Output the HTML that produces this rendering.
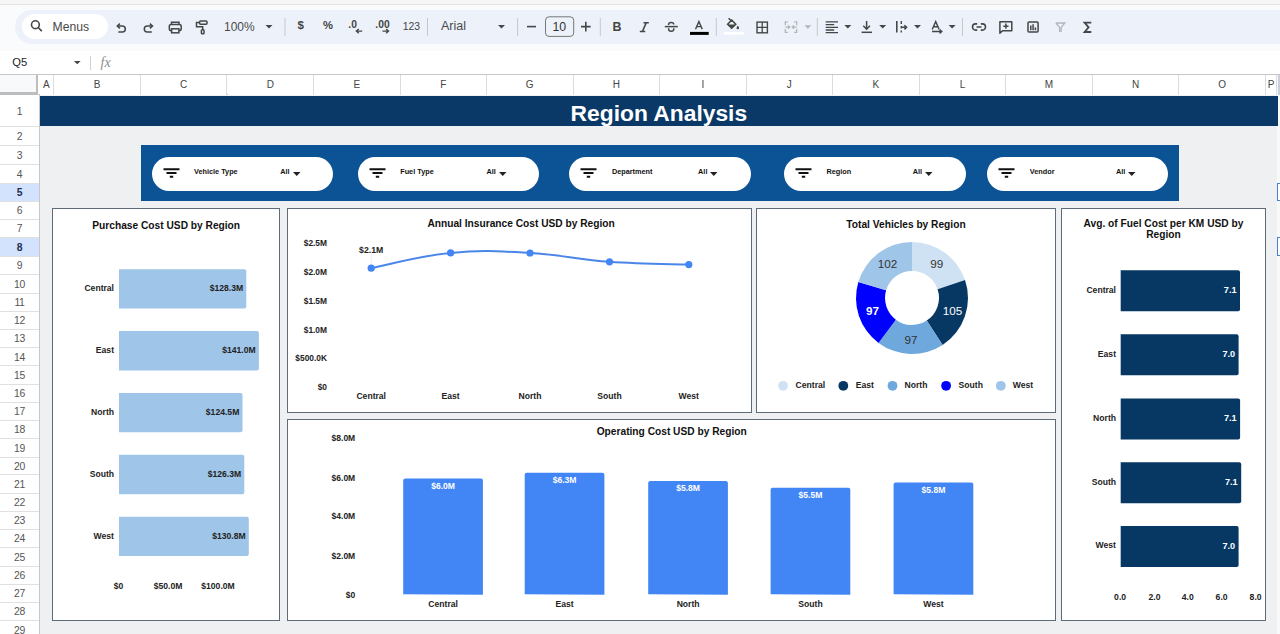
<!DOCTYPE html>
<html><head><meta charset="utf-8"><title>Region Analysis</title>
<style>
*{box-sizing:border-box}
html,body{margin:0;padding:0}
body{width:1280px;height:634px;overflow:hidden;position:relative;background:#f9fbfd;font-family:"Liberation Sans",sans-serif;color:#222}
.a{position:absolute}
.t{position:absolute;white-space:nowrap;line-height:1}
.b{font-weight:bold}
.rh{position:absolute;left:0;width:39px;background:#fff;color:#555;font-size:10.4px;letter-spacing:-0.4px;text-align:center;display:flex;align-items:center;justify-content:center}
.rh.sel{background:#d3e3fd;color:#1d2f55;font-weight:bold}
.ch{position:absolute;top:75px;height:20px;border-right:1px solid #dadce0;background:#fff;color:#444;font-size:10px;display:flex;align-items:center;justify-content:center;padding-bottom:2px}
.card{position:absolute;background:#fff;border:1px solid #5e6b78}
.pill{position:absolute;top:157px;height:34px;width:181.5px;background:#fff;border-radius:17px}
</style></head><body>

<div class="a" style="left:0;top:0;width:1280px;height:5px;background:#f6f6f6;border-bottom:1px solid #e2e2e2"></div>
<div class="a" style="left:15px;top:10px;width:1290px;height:33.5px;background:#edf2fa;border-radius:17px"></div>
<div class="a" style="left:22px;top:14px;width:86px;height:25px;background:#fff;border-radius:13px"></div>
<div class="t" style="left:52.5px;top:20.5px;font-size:12.2px;color:#4a4a4a">Menus</div>
<svg class="a" style="left:0;top:0" width="1280" height="50" viewBox="0 0 1280 50"><circle cx="35.4" cy="24.7" r="3.9" fill="none" stroke="#444746" stroke-width="1.6"/><path d="M38.2 27.5 L41.8 31.2" stroke="#444746" stroke-width="1.7"/><path d="M117.5 26 H122.3 A3 3 0 0 1 122.3 32 H118.3" fill="none" stroke="#444746" stroke-width="1.5"/><path d="M119.9 23.6 L117.3 26 L119.9 28.4" fill="none" stroke="#444746" stroke-width="1.5"/><path d="M152.3 26 H147.3 A3 3 0 0 0 147.3 32 H151.8" fill="none" stroke="#444746" stroke-width="1.5"/><path d="M149.9 23.6 L152.5 26 L149.9 28.4" fill="none" stroke="#444746" stroke-width="1.5"/><path d="M171.5 24.3 V22.3 H179 V24.3" fill="none" stroke="#444746" stroke-width="1.5"/><rect x="169.3" y="24.5" width="11.9" height="6" rx="1.8" fill="none" stroke="#444746" stroke-width="1.5"/><rect x="171.6" y="28.8" width="7.3" height="4" fill="#edf2fa" stroke="#444746" stroke-width="1.5"/><rect x="199.6" y="21" width="7.4" height="3.2" rx="0.9" fill="none" stroke="#444746" stroke-width="1.5"/><path d="M199.6 22.6 H196.5 V26.8 H202.7 V29.8" fill="none" stroke="#444746" stroke-width="1.5"/><rect x="201.4" y="29.8" width="2.6" height="4" rx="0.8" fill="none" stroke="#444746" stroke-width="1.5"/><path d="M265.5 25 H272.5 L269.0 28.5 Z" fill="#444746"/><path d="M285 18 V36" stroke="#c7c7c7" stroke-width="1"/><path d="M427.5 18 V36" stroke="#c7c7c7" stroke-width="1"/><path d="M517.6 18 V36" stroke="#c7c7c7" stroke-width="1"/><path d="M600.3 18 V36" stroke="#c7c7c7" stroke-width="1"/><path d="M716.3 18 V36" stroke="#c7c7c7" stroke-width="1"/><path d="M817.3 18 V36" stroke="#c7c7c7" stroke-width="1"/><path d="M962.5 18 V36" stroke="#c7c7c7" stroke-width="1"/><path d="M362.2 31.1 H356.5 M358.8 29 L356.3 31.1 L358.8 33.2" fill="none" stroke="#444746" stroke-width="1.3"/><path d="M382.5 31.1 H388.4 M386.1 29 L388.6 31.1 L386.1 33.2" fill="none" stroke="#444746" stroke-width="1.3"/><path d="M498 25 H505 L501.5 28.5 Z" fill="#444746"/><path d="M527 26.6 H536" stroke="#444746" stroke-width="1.6"/><path d="M581 26.6 H590.6 M585.8 21.8 V31.4" stroke="#444746" stroke-width="1.6"/><rect x="545.5" y="16.8" width="28.2" height="19.6" rx="3.5" fill="none" stroke="#747775" stroke-width="1"/><path d="M643.5 22.8 H648.8 M639.8 31.5 H645.2 M646.2 22.8 L642.4 31.5" fill="none" stroke="#444746" stroke-width="1.6"/><path d="M664.8 26.6 H677.8" stroke="#444746" stroke-width="1.5"/><path d="M668.6 25 V24.6 A2.6 2.2 0 0 1 673.8 24.6" fill="none" stroke="#444746" stroke-width="1.5"/><path d="M668.6 28.2 V29 A2.6 2.3 0 0 0 673.8 29 V28.2" fill="none" stroke="#444746" stroke-width="1.5"/><path d="M695.5 29.3 L698.9 21.6 L702.3 29.3 M696.8 26.6 H701" fill="none" stroke="#444746" stroke-width="1.4"/><rect x="690" y="31.9" width="18.7" height="3" fill="#000"/><path d="M727.6 24.2 L731.7 20.1 L735.8 24.2 L731.7 28.3 Z" fill="none" stroke="#444746" stroke-width="1.5"/><path d="M727.6 24.5 H735.8 L731.7 28.3 Z" fill="#444746"/><path d="M728.6 18.2 L731.9 21.5" stroke="#444746" stroke-width="1.5"/><path d="M737.8 25.6 Q736.3 27.6 736.5 28.2 A1.35 1.35 0 0 0 739.1 28.2 Q739.3 27.6 737.8 25.6 Z" fill="#444746"/><rect x="724" y="32" width="19.8" height="2.7" fill="#fff"/><rect x="757" y="22.1" width="10.4" height="10.7" fill="none" stroke="#444746" stroke-width="1.4"/><path d="M762.2 22.1 V32.8 M757 27.45 H767.4" stroke="#444746" stroke-width="1.3"/><path d="M787.8 21.9 H785.3 V25.3 M785.3 29 V32.3 H787.8 M794.2 21.9 H796.7 V25.3 M796.7 29 V32.3 H794.2" fill="none" stroke="#b3b6b9" stroke-width="1.3"/><path d="M785.3 27.1 H789.6 M788 25.4 L789.8 27.1 L788 28.8 M796.7 27.1 H792.4 M794 25.4 L792.2 27.1 L794 28.8" fill="none" stroke="#b3b6b9" stroke-width="1.3"/><path d="M804.4 25.3 H811.4 L807.9 28.8 Z" fill="#b3b6b9"/><path d="M825.7 21.9 H838 M825.7 24.6 H834.2 M825.7 27.3 H838 M825.7 30 H834.2 M825.7 32.7 H838" stroke="#444746" stroke-width="1.3"/><path d="M844.3 25.1 H851.3 L847.8 28.6 Z" fill="#444746"/><path d="M866.6 21 V29 M863.3 25.8 L866.6 29.2 L869.9 25.8" fill="none" stroke="#444746" stroke-width="1.5"/><path d="M861.6 32.3 H872" stroke="#444746" stroke-width="1.5"/><path d="M879.2 25.1 H886.2 L882.7 28.6 Z" fill="#444746"/><path d="M896.8 21 V32.6" stroke="#444746" stroke-width="1.6"/><path d="M901.3 21 V24 M901.3 26 V28.6 M901.3 30.6 V32.6" stroke="#444746" stroke-width="1.4"/><path d="M901.6 27.3 H906.4 M904.4 25.2 L906.6 27.3 L904.4 29.4" fill="none" stroke="#444746" stroke-width="1.5"/><path d="M914 25.1 H921 L917.5 28.6 Z" fill="#444746"/><path d="M932.2 29.5 L935.7 21.6 L939.2 29.5 M933.5 26.8 H937.9" fill="none" stroke="#444746" stroke-width="1.4"/><path d="M932 31.5 H941.6 M939.6 29.6 L941.8 31.5 L939.6 33.4" fill="none" stroke="#444746" stroke-width="1.4"/><path d="M948.6 25.1 H955.6 L952.1 28.6 Z" fill="#444746"/><path d="M977.2 23.9 H975.6 A3.1 3.1 0 0 0 975.6 30.1 H977.2 M980.8 23.9 H982.4 A3.1 3.1 0 0 1 982.4 30.1 H980.8 M976.5 27 H981.5" fill="none" stroke="#444746" stroke-width="1.6"/><path d="M999.9 21.7 H1011.8 V30.8 H1002.5 L999.9 33.3 Z" fill="none" stroke="#444746" stroke-width="1.5" stroke-linejoin="round"/><path d="M1005.9 23.6 V28.8 M1003.3 26.2 H1008.5" stroke="#444746" stroke-width="1.5"/><rect x="1028" y="22" width="10.1" height="10.1" rx="1" fill="none" stroke="#444746" stroke-width="1.5"/><path d="M1030.8 30.2 V25.4 M1033.1 30.2 V24.2 M1035.4 30.2 V27.6" stroke="#444746" stroke-width="1.5"/><path d="M1055.9 23 H1064.9 L1061.2 27.4 V32 M1059.6 32 V27.4 L1055.9 23" fill="none" stroke="#b3b6b9" stroke-width="1.3"/><path d="M1091.3 22.6 H1084.6 L1088.6 27.3 L1084.6 32 H1091.3" fill="none" stroke="#444746" stroke-width="1.8"/></svg>
<div class="t" style="left:224px;top:21px;font-size:12px;color:#4a4a4a">100%</div>
<div class="t b" style="left:297.5px;top:20.4px;font-size:11.5px;color:#444">$</div>
<div class="t b" style="left:323px;top:20.4px;font-size:11.2px;color:#444">%</div>
<div class="t b" style="left:348.3px;top:19.5px;font-size:10.3px;color:#444">.0</div>
<div class="t b" style="left:375.3px;top:19.5px;font-size:10.3px;color:#444">.00</div>
<div class="t" style="left:402.8px;top:21.5px;font-size:10.4px;color:#444">123</div>
<div class="t" style="left:441px;top:20px;font-size:12.5px;color:#4a4a4a">Arial</div>
<div class="t" style="left:552.5px;top:21px;font-size:12.3px;color:#333">10</div>
<div class="t b" style="left:612.6px;top:21.3px;font-size:12.4px;color:#444">B</div>
<div class="a" style="left:0;top:51px;width:1280px;height:23px;background:#fff"></div>
<div class="t" style="left:12.3px;top:57px;font-size:11.2px;color:#222">Q5</div>
<svg class="a" style="left:73.5px;top:61px" width="7" height="4" viewBox="0 0 7 4"><path d="M0 0 H6.6 L3.3 3.2 Z" fill="#444"/></svg>
<div class="a" style="left:90px;top:56px;width:1px;height:14px;background:#d0d0d0"></div>
<div class="t" style="left:100.5px;top:56px;font-size:14px;color:#8a8e92;font-style:italic;font-family:'Liberation Serif',serif">fx</div>
<div class="a" style="left:0;top:74px;width:1280px;height:21px;background:#fff;border-top:1px solid #c7c7c7;border-bottom:1px solid #c7c7c7"></div>
<div class="a" style="left:0;top:75px;width:38px;height:20px;background:#f8f9fa;border-right:2px solid #bdbdbd;border-bottom:3px solid #bdbdbd"></div>
<div class="ch" style="left:39.5px;width:14.9px">A</div>
<div class="ch" style="left:54.4px;width:86.5px">B</div>
<div class="ch" style="left:140.9px;width:86.5px">C</div>
<div class="ch" style="left:227.5px;width:86.5px">D</div>
<div class="ch" style="left:314.0px;width:86.5px">E</div>
<div class="ch" style="left:400.5px;width:86.5px">F</div>
<div class="ch" style="left:487.0px;width:86.5px">G</div>
<div class="ch" style="left:573.6px;width:86.5px">H</div>
<div class="ch" style="left:660.1px;width:86.5px">I</div>
<div class="ch" style="left:746.6px;width:86.5px">J</div>
<div class="ch" style="left:833.2px;width:86.5px">K</div>
<div class="ch" style="left:919.7px;width:86.5px">L</div>
<div class="ch" style="left:1006.2px;width:86.5px">M</div>
<div class="ch" style="left:1092.8px;width:86.5px">N</div>
<div class="ch" style="left:1179.3px;width:86.5px">O</div>
<div class="ch" style="left:1265.8px;width:11.7px">P</div>
<div class="rh" style="top:95.0px;height:32.1px">1</div>
<div class="rh" style="top:126.6px;height:19.1px">2</div>
<div class="rh" style="top:145.2px;height:19.8px">3</div>
<div class="rh" style="top:164.5px;height:19.4px">4</div>
<div class="rh sel" style="top:183.4px;height:18.5px">5</div>
<div class="rh" style="top:201.4px;height:18.5px">6</div>
<div class="rh" style="top:219.4px;height:18.6px">7</div>
<div class="rh sel" style="top:237.5px;height:19.5px">8</div>
<div class="rh" style="top:256.5px;height:18.9px">9</div>
<div class="rh" style="top:274.9px;height:19.0px">10</div>
<div class="rh" style="top:293.4px;height:18.5px">11</div>
<div class="rh" style="top:311.4px;height:18.5px">12</div>
<div class="rh" style="top:329.4px;height:19.0px">13</div>
<div class="rh" style="top:347.9px;height:18.5px">14</div>
<div class="rh" style="top:365.9px;height:19.1px">15</div>
<div class="rh" style="top:384.5px;height:18.5px">16</div>
<div class="rh" style="top:402.5px;height:18.4px">17</div>
<div class="rh" style="top:420.4px;height:18.7px">18</div>
<div class="rh" style="top:438.6px;height:18.9px">19</div>
<div class="rh" style="top:457.0px;height:18.4px">20</div>
<div class="rh" style="top:474.9px;height:19.0px">21</div>
<div class="rh" style="top:493.4px;height:18.3px">22</div>
<div class="rh" style="top:511.2px;height:18.7px">23</div>
<div class="rh" style="top:529.4px;height:18.8px">24</div>
<div class="rh" style="top:547.7px;height:18.8px">25</div>
<div class="rh" style="top:566.0px;height:18.9px">26</div>
<div class="rh" style="top:584.4px;height:18.7px">27</div>
<div class="rh" style="top:602.6px;height:18.8px">28</div>
<div class="rh" style="top:620.9px;height:18.8px">29</div>
<div class="a" style="left:0;top:126px;width:39px;height:1px;background:#e0e0e0"></div>
<div class="a" style="left:0;top:145px;width:39px;height:1px;background:#e0e0e0"></div>
<div class="a" style="left:0;top:164px;width:39px;height:1px;background:#e0e0e0"></div>
<div class="a" style="left:0;top:183px;width:39px;height:1px;background:#e0e0e0"></div>
<div class="a" style="left:0;top:201px;width:39px;height:1px;background:#e0e0e0"></div>
<div class="a" style="left:0;top:219px;width:39px;height:1px;background:#e0e0e0"></div>
<div class="a" style="left:0;top:237px;width:39px;height:1px;background:#e0e0e0"></div>
<div class="a" style="left:0;top:256px;width:39px;height:1px;background:#e0e0e0"></div>
<div class="a" style="left:0;top:274px;width:39px;height:1px;background:#e0e0e0"></div>
<div class="a" style="left:0;top:293px;width:39px;height:1px;background:#e0e0e0"></div>
<div class="a" style="left:0;top:311px;width:39px;height:1px;background:#e0e0e0"></div>
<div class="a" style="left:0;top:329px;width:39px;height:1px;background:#e0e0e0"></div>
<div class="a" style="left:0;top:347px;width:39px;height:1px;background:#e0e0e0"></div>
<div class="a" style="left:0;top:365px;width:39px;height:1px;background:#e0e0e0"></div>
<div class="a" style="left:0;top:384px;width:39px;height:1px;background:#e0e0e0"></div>
<div class="a" style="left:0;top:402px;width:39px;height:1px;background:#e0e0e0"></div>
<div class="a" style="left:0;top:420px;width:39px;height:1px;background:#e0e0e0"></div>
<div class="a" style="left:0;top:438px;width:39px;height:1px;background:#e0e0e0"></div>
<div class="a" style="left:0;top:457px;width:39px;height:1px;background:#e0e0e0"></div>
<div class="a" style="left:0;top:474px;width:39px;height:1px;background:#e0e0e0"></div>
<div class="a" style="left:0;top:493px;width:39px;height:1px;background:#e0e0e0"></div>
<div class="a" style="left:0;top:511px;width:39px;height:1px;background:#e0e0e0"></div>
<div class="a" style="left:0;top:529px;width:39px;height:1px;background:#e0e0e0"></div>
<div class="a" style="left:0;top:547px;width:39px;height:1px;background:#e0e0e0"></div>
<div class="a" style="left:0;top:566px;width:39px;height:1px;background:#e0e0e0"></div>
<div class="a" style="left:0;top:584px;width:39px;height:1px;background:#e0e0e0"></div>
<div class="a" style="left:0;top:602px;width:39px;height:1px;background:#e0e0e0"></div>
<div class="a" style="left:0;top:620px;width:39px;height:1px;background:#e0e0e0"></div>
<div class="a" style="left:0;top:639px;width:39px;height:1px;background:#e0e0e0"></div>
<div class="a" style="left:39px;top:95px;width:1px;height:540px;background:#c7c7c7"></div>
<div class="a" style="left:40px;top:95px;width:1237px;height:540px;background:#eff0f2"></div>
<div class="a" style="left:1277px;top:75px;width:3px;height:560px;background:#f8f9fa"></div>
<div class="a" style="left:1277.5px;top:75px;width:2px;height:20px;background:#c9d0dc"></div>
<div class="a" style="left:1277px;top:183px;width:4px;height:18px;border:1px solid #4a7fd0;background:#fff"></div>
<div class="a" style="left:1277px;top:237px;width:4px;height:19px;border:1px solid #4a7fd0;background:#fff"></div>
<div class="a" style="left:40px;top:95.5px;width:1237.5px;height:30.5px;background:#0a3967"></div>
<div class="t b" style="left:570.6px;top:101.8px;font-size:22.8px;color:#fff">Region Analysis</div>
<div class="a" style="left:140.5px;top:145px;width:1038px;height:56px;background:#0b5394"></div>
<div class="pill" style="left:151.5px;width:181.5px"></div>
<svg class="a" style="left:162.5px;top:168px" width="17" height="13" viewBox="0 0 17 13"><path d="M0.5 1.2 H16.5 M3.5 5 H13.5 M6.8 8.8 H10.2" stroke="#111" stroke-width="2"/></svg>
<div class="t b" style="left:194.0px;top:168px;font-size:7.3px;color:#111">Vehicle Type</div>
<div class="t b" style="left:280.2px;top:168px;font-size:7.3px;color:#111">All</div>
<svg class="a" style="left:292.5px;top:172px" width="8" height="5" viewBox="0 0 8 5"><path d="M0 0 H7.5 L3.75 4 Z" fill="#222"/></svg>
<div class="pill" style="left:357.7px;width:181.5px"></div>
<svg class="a" style="left:368.7px;top:168px" width="17" height="13" viewBox="0 0 17 13"><path d="M0.5 1.2 H16.5 M3.5 5 H13.5 M6.8 8.8 H10.2" stroke="#111" stroke-width="2"/></svg>
<div class="t b" style="left:400.2px;top:168px;font-size:7.3px;color:#111">Fuel Type</div>
<div class="t b" style="left:486.4px;top:168px;font-size:7.3px;color:#111">All</div>
<svg class="a" style="left:498.7px;top:172px" width="8" height="5" viewBox="0 0 8 5"><path d="M0 0 H7.5 L3.75 4 Z" fill="#222"/></svg>
<div class="pill" style="left:569.4px;width:181.5px"></div>
<svg class="a" style="left:580.4px;top:168px" width="17" height="13" viewBox="0 0 17 13"><path d="M0.5 1.2 H16.5 M3.5 5 H13.5 M6.8 8.8 H10.2" stroke="#111" stroke-width="2"/></svg>
<div class="t b" style="left:611.9px;top:168px;font-size:7.3px;color:#111">Department</div>
<div class="t b" style="left:698.0999999999999px;top:168px;font-size:7.3px;color:#111">All</div>
<svg class="a" style="left:710.4px;top:172px" width="8" height="5" viewBox="0 0 8 5"><path d="M0 0 H7.5 L3.75 4 Z" fill="#222"/></svg>
<div class="pill" style="left:784px;width:181.5px"></div>
<svg class="a" style="left:795px;top:168px" width="17" height="13" viewBox="0 0 17 13"><path d="M0.5 1.2 H16.5 M3.5 5 H13.5 M6.8 8.8 H10.2" stroke="#111" stroke-width="2"/></svg>
<div class="t b" style="left:826.5px;top:168px;font-size:7.3px;color:#111">Region</div>
<div class="t b" style="left:912.7px;top:168px;font-size:7.3px;color:#111">All</div>
<svg class="a" style="left:925px;top:172px" width="8" height="5" viewBox="0 0 8 5"><path d="M0 0 H7.5 L3.75 4 Z" fill="#222"/></svg>
<div class="pill" style="left:987.3px;width:181px"></div>
<svg class="a" style="left:998.3px;top:168px" width="17" height="13" viewBox="0 0 17 13"><path d="M0.5 1.2 H16.5 M3.5 5 H13.5 M6.8 8.8 H10.2" stroke="#111" stroke-width="2"/></svg>
<div class="t b" style="left:1029.8px;top:168px;font-size:7.3px;color:#111">Vendor</div>
<div class="t b" style="left:1116.0px;top:168px;font-size:7.3px;color:#111">All</div>
<svg class="a" style="left:1128.3px;top:172px" width="8" height="5" viewBox="0 0 8 5"><path d="M0 0 H7.5 L3.75 4 Z" fill="#222"/></svg>
<div class="card" style="left:52px;top:208px;width:228px;height:412.5px"></div>
<div class="card" style="left:287px;top:208px;width:465px;height:205px"></div>
<div class="card" style="left:755.5px;top:208px;width:300px;height:205px"></div>
<div class="card" style="left:1061px;top:208px;width:205px;height:412.5px"></div>
<div class="card" style="left:287px;top:419px;width:768.5px;height:201.5px"></div>
<svg class="a" style="left:0;top:0" width="1280" height="634" viewBox="0 0 1280 634" font-family="Liberation Sans, sans-serif"><text x="166.2" y="229" font-size="10.2" text-anchor="middle" font-weight="bold" fill="#111">Purchase Cost USD by Region</text><path d="M119 269.2 H244.3 Q246.3 269.2 246.3 271.2 V306.6 Q246.3 308.6 244.3 308.6 H119 Z" fill="#9fc5e8"/><text x="114" y="291.0" font-size="8.6" text-anchor="end" font-weight="bold" fill="#222">Central</text><text x="243.1" y="291.0" font-size="8.6" text-anchor="end" font-weight="bold" fill="#222">$128.3M</text><path d="M119 331 H256.9 Q258.9 331 258.9 333 V368.4 Q258.9 370.4 256.9 370.4 H119 Z" fill="#9fc5e8"/><text x="114" y="352.8" font-size="8.6" text-anchor="end" font-weight="bold" fill="#222">East</text><text x="255.7" y="352.8" font-size="8.6" text-anchor="end" font-weight="bold" fill="#222">$141.0M</text><path d="M119 392.9 H240.5 Q242.5 392.9 242.5 394.9 V430.3 Q242.5 432.3 240.5 432.3 H119 Z" fill="#9fc5e8"/><text x="114" y="414.7" font-size="8.6" text-anchor="end" font-weight="bold" fill="#222">North</text><text x="239.3" y="414.7" font-size="8.6" text-anchor="end" font-weight="bold" fill="#222">$124.5M</text><path d="M119 454.8 H242.3 Q244.3 454.8 244.3 456.8 V492.2 Q244.3 494.2 242.3 494.2 H119 Z" fill="#9fc5e8"/><text x="114" y="476.6" font-size="8.6" text-anchor="end" font-weight="bold" fill="#222">South</text><text x="241.1" y="476.6" font-size="8.6" text-anchor="end" font-weight="bold" fill="#222">$126.3M</text><path d="M119 516.7 H246.8 Q248.8 516.7 248.8 518.7 V554.1 Q248.8 556.1 246.8 556.1 H119 Z" fill="#9fc5e8"/><text x="114" y="538.5000000000001" font-size="8.6" text-anchor="end" font-weight="bold" fill="#222">West</text><text x="245.6" y="538.5000000000001" font-size="8.6" text-anchor="end" font-weight="bold" fill="#222">$130.8M</text><text x="118.5" y="588.5" font-size="8.6" text-anchor="middle" font-weight="bold" fill="#222">$0</text><text x="168.1" y="588.5" font-size="8.6" text-anchor="middle" font-weight="bold" fill="#222">$50.0M</text><text x="218" y="588.5" font-size="8.6" text-anchor="middle" font-weight="bold" fill="#222">$100.0M</text><text x="521.1" y="227.2" font-size="10.2" text-anchor="middle" font-weight="bold" fill="#111">Annual Insurance Cost USD by Region</text><text x="327" y="246.1" font-size="8.4" text-anchor="end" font-weight="bold" fill="#222">$2.5M</text><text x="327" y="274.90000000000003" font-size="8.4" text-anchor="end" font-weight="bold" fill="#222">$2.0M</text><text x="327" y="303.70000000000005" font-size="8.4" text-anchor="end" font-weight="bold" fill="#222">$1.5M</text><text x="327" y="332.5" font-size="8.4" text-anchor="end" font-weight="bold" fill="#222">$1.0M</text><text x="327" y="361.3" font-size="8.4" text-anchor="end" font-weight="bold" fill="#222">$500.0K</text><text x="327" y="390.1" font-size="8.4" text-anchor="end" font-weight="bold" fill="#222">$0</text><path d="M371.2 268.2 C387.1 265.1 418.8 255.9 450.6 252.9 C482.4 249.9 498.2 251.2 530 253 C561.8 254.8 577.7 259.5 609.5 261.8 C641.3 264.1 672.9 264.0 688.8 264.6" fill="none" stroke="#4a86e8" stroke-width="2"/><path d="M371.2 254 V265" stroke="#e2e2e2" stroke-width="0.6"/><circle cx="371.2" cy="268.2" r="3.6" fill="#4285f4"/><circle cx="450.6" cy="252.9" r="3.6" fill="#4285f4"/><circle cx="530" cy="253" r="3.6" fill="#4285f4"/><circle cx="609.5" cy="261.8" r="3.6" fill="#4285f4"/><circle cx="688.8" cy="264.6" r="3.6" fill="#4285f4"/><text x="371.2" y="252.9" font-size="8.7" text-anchor="middle" font-weight="bold" fill="#222">$2.1M</text><text x="371.2" y="399.2" font-size="8.6" text-anchor="middle" font-weight="bold" fill="#222">Central</text><text x="450.6" y="399.2" font-size="8.6" text-anchor="middle" font-weight="bold" fill="#222">East</text><text x="530" y="399.2" font-size="8.6" text-anchor="middle" font-weight="bold" fill="#222">North</text><text x="609.5" y="399.2" font-size="8.6" text-anchor="middle" font-weight="bold" fill="#222">South</text><text x="688.8" y="399.2" font-size="8.6" text-anchor="middle" font-weight="bold" fill="#222">West</text><text x="906" y="227.6" font-size="10.2" text-anchor="middle" font-weight="bold" fill="#111">Total Vehicles by Region</text><path d="M912.00 242.00 A56 56 0 0 1 965.04 280.03 L937.57 289.33 A27 27 0 0 0 912.00 271.00 Z" fill="#cfe2f3"/><path d="M965.04 280.03 A56 56 0 0 1 942.60 344.90 L926.75 320.61 A27 27 0 0 0 937.57 289.33 Z" fill="#073763"/><path d="M942.60 344.90 A56 56 0 0 1 878.52 342.89 L895.86 319.64 A27 27 0 0 0 926.75 320.61 Z" fill="#6fa8dc"/><path d="M878.52 342.89 A56 56 0 0 1 858.32 282.04 L886.12 290.30 A27 27 0 0 0 895.86 319.64 Z" fill="#0000ff"/><path d="M858.32 282.04 A56 56 0 0 1 912.00 242.00 L912.00 271.00 A27 27 0 0 0 886.12 290.30 Z" fill="#9fc5e8"/><text x="936.7" y="267.8" font-size="11.7" text-anchor="middle" font-weight="normal" fill="#333">99</text><text x="952.5" y="315.2" font-size="11.7" text-anchor="middle" font-weight="normal" fill="#fff">105</text><text x="911" y="343.7" font-size="11.7" text-anchor="middle" font-weight="normal" fill="#333">97</text><text x="872.6" y="315.2" font-size="11.7" text-anchor="middle" font-weight="bold" fill="#fff">97</text><text x="887.4" y="267.8" font-size="11.7" text-anchor="middle" font-weight="normal" fill="#333">102</text><circle cx="783.1" cy="385.8" r="4.9" fill="#cfe2f3"/><text x="795.6" y="388.3" font-size="8.6" text-anchor="start" font-weight="bold" fill="#222">Central</text><circle cx="843.3" cy="385.8" r="4.9" fill="#073763"/><text x="855.8" y="388.3" font-size="8.6" text-anchor="start" font-weight="bold" fill="#222">East</text><circle cx="892.5" cy="385.8" r="4.9" fill="#6fa8dc"/><text x="904.5" y="388.3" font-size="8.6" text-anchor="start" font-weight="bold" fill="#222">North</text><circle cx="946.1" cy="385.8" r="4.9" fill="#0000ff"/><text x="958.6" y="388.3" font-size="8.6" text-anchor="start" font-weight="bold" fill="#222">South</text><circle cx="1000.8" cy="385.8" r="4.9" fill="#9fc5e8"/><text x="1012.8" y="388.3" font-size="8.6" text-anchor="start" font-weight="bold" fill="#222">West</text><text x="1163.5" y="227.4" font-size="10.2" text-anchor="middle" font-weight="bold" fill="#111">Avg. of Fuel Cost per KM USD by</text><text x="1163.5" y="237.9" font-size="10.2" text-anchor="middle" font-weight="bold" fill="#111">Region</text><path d="M1120.7 270.2 H1238.0 Q1240 270.2 1240 272.2 V309.2 Q1240 311.2 1238.0 311.2 H1120.7 Z" fill="#073763"/><text x="1116" y="292.59999999999997" font-size="8.6" text-anchor="end" font-weight="bold" fill="#222">Central</text><text x="1236.5" y="292.8" font-size="9.1" text-anchor="end" font-weight="bold" fill="#fff">7.1</text><path d="M1120.7 334.3 H1236.6 Q1238.6 334.3 1238.6 336.3 V373.3 Q1238.6 375.3 1236.6 375.3 H1120.7 Z" fill="#073763"/><text x="1116" y="356.7" font-size="8.6" text-anchor="end" font-weight="bold" fill="#222">East</text><text x="1235.1" y="356.90000000000003" font-size="9.1" text-anchor="end" font-weight="bold" fill="#fff">7.0</text><path d="M1120.7 398.4 H1238.1 Q1240.1 398.4 1240.1 400.4 V437.4 Q1240.1 439.4 1238.1 439.4 H1120.7 Z" fill="#073763"/><text x="1116" y="420.79999999999995" font-size="8.6" text-anchor="end" font-weight="bold" fill="#222">North</text><text x="1236.6" y="421.0" font-size="9.1" text-anchor="end" font-weight="bold" fill="#fff">7.1</text><path d="M1120.7 462.3 H1239.2 Q1241.2 462.3 1241.2 464.3 V501.3 Q1241.2 503.3 1239.2 503.3 H1120.7 Z" fill="#073763"/><text x="1116" y="484.7" font-size="8.6" text-anchor="end" font-weight="bold" fill="#222">South</text><text x="1237.7" y="484.90000000000003" font-size="9.1" text-anchor="end" font-weight="bold" fill="#fff">7.1</text><path d="M1120.7 526 H1236.6 Q1238.6 526 1238.6 528 V565 Q1238.6 567 1236.6 567 H1120.7 Z" fill="#073763"/><text x="1116" y="548.4" font-size="8.6" text-anchor="end" font-weight="bold" fill="#222">West</text><text x="1235.1" y="548.6" font-size="9.1" text-anchor="end" font-weight="bold" fill="#fff">7.0</text><text x="1120.1" y="599.9" font-size="8.6" text-anchor="middle" font-weight="bold" fill="#222">0.0</text><text x="1154.5" y="599.9" font-size="8.6" text-anchor="middle" font-weight="bold" fill="#222">2.0</text><text x="1187.7" y="599.9" font-size="8.6" text-anchor="middle" font-weight="bold" fill="#222">4.0</text><text x="1221.6" y="599.9" font-size="8.6" text-anchor="middle" font-weight="bold" fill="#222">6.0</text><text x="1255.6" y="599.9" font-size="8.6" text-anchor="middle" font-weight="bold" fill="#222">8.0</text><text x="671.7" y="434.8" font-size="10.2" text-anchor="middle" font-weight="bold" fill="#111">Operating Cost USD by Region</text><text x="355.2" y="441.40000000000003" font-size="8.5" text-anchor="end" font-weight="bold" fill="#222">$8.0M</text><text x="355.2" y="480.5" font-size="8.5" text-anchor="end" font-weight="bold" fill="#222">$6.0M</text><text x="355.2" y="519.3000000000001" font-size="8.5" text-anchor="end" font-weight="bold" fill="#222">$4.0M</text><text x="355.2" y="558.8000000000001" font-size="8.5" text-anchor="end" font-weight="bold" fill="#222">$2.0M</text><text x="355.2" y="597.6" font-size="8.5" text-anchor="end" font-weight="bold" fill="#222">$0</text><path d="M403.2 594.2 V480.4 Q403.2 478.4 405.2 478.4 H480.9 Q482.9 478.4 482.9 480.4 V594.8 Z" fill="#4285f4"/><text x="443.1" y="488.79999999999995" font-size="8.6" text-anchor="middle" font-weight="bold" fill="#fff">$6.0M</text><text x="443.1" y="606.8" font-size="8.6" text-anchor="middle" font-weight="bold" fill="#222">Central</text><path d="M524.7 594.2 V474.7 Q524.7 472.7 526.7 472.7 H602.4 Q604.4 472.7 604.4 474.7 V594.8 Z" fill="#4285f4"/><text x="564.6" y="483.09999999999997" font-size="8.6" text-anchor="middle" font-weight="bold" fill="#fff">$6.3M</text><text x="564.6" y="606.8" font-size="8.6" text-anchor="middle" font-weight="bold" fill="#222">East</text><path d="M648.2 594.2 V483 Q648.2 481 650.2 481 H725.9 Q727.9 481 727.9 483 V594.8 Z" fill="#4285f4"/><text x="688.1" y="491.4" font-size="8.6" text-anchor="middle" font-weight="bold" fill="#fff">$5.8M</text><text x="688.1" y="606.8" font-size="8.6" text-anchor="middle" font-weight="bold" fill="#222">North</text><path d="M770.6 594.2 V489.8 Q770.6 487.8 772.6 487.8 H848.3 Q850.3 487.8 850.3 489.8 V594.8 Z" fill="#4285f4"/><text x="810.5" y="498.2" font-size="8.6" text-anchor="middle" font-weight="bold" fill="#fff">$5.5M</text><text x="810.5" y="606.8" font-size="8.6" text-anchor="middle" font-weight="bold" fill="#222">South</text><path d="M893.6 594.2 V484.5 Q893.6 482.5 895.6 482.5 H971.3 Q973.3 482.5 973.3 484.5 V594.8 Z" fill="#4285f4"/><text x="933.5" y="492.9" font-size="8.6" text-anchor="middle" font-weight="bold" fill="#fff">$5.8M</text><text x="933.5" y="606.8" font-size="8.6" text-anchor="middle" font-weight="bold" fill="#222">West</text></svg>
</body></html>
